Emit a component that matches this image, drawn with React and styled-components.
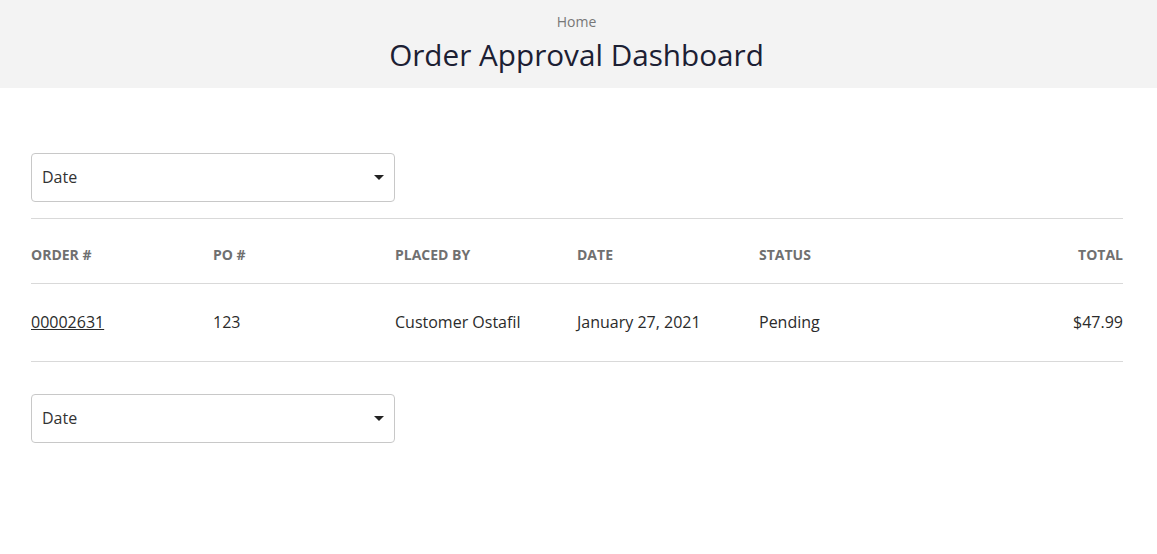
import React from 'react';
import styled, { createGlobalStyle } from 'styled-components';

const GlobalStyle = createGlobalStyle`
  body {
    margin: 0;
    background: #fff;
    font-family: "Open Sans", "Liberation Sans", sans-serif;
    color: #333;
  }
`;

const Header = styled.header`
  height: 88px;
  background: #f3f3f3;
  display: flex;
  flex-direction: column;
  align-items: center;
  box-sizing: border-box;
  padding: 12px 35px 0 31px;
`;

const Crumb = styled.a`
  font-size: 14px;
  line-height: 20px;
  color: #777;
  text-decoration: none;
`;

const Title = styled.h1`
  margin: 5px 0 0;
  font-size: 29.7px;
  font-weight: 400;
  line-height: 36px;
  color: #1c2033;
`;

const Main = styled.main`
  padding: 65px 34px 0 31px;
`;

const SelectBox = styled.div`
  width: 364px;
  height: 49px;
  box-sizing: border-box;
  border: 1px solid #c8c8c8;
  border-radius: 4px;
  display: flex;
  align-items: center;
  justify-content: space-between;
  padding: 0 10px 2px 10px;
  font-size: 16px;
  color: #333;
  margin-bottom: ${(p) => p.gap || 0}px;
`;

const Caret = styled.span`
  width: 0;
  height: 0;
  border-left: 5px solid transparent;
  border-right: 5px solid transparent;
  border-top: 5px solid #222;
  margin: 2px 0 0;
`;

const Table = styled.div`
  border-top: 1px solid #d9d9d9;
  margin-bottom: 32px;
`;

const Row = styled.div`
  display: grid;
  grid-template-columns: repeat(6, 1fr);
  align-items: center;
  height: ${(p) => p.h}px;
  padding-top: ${(p) => p.top || 0}px;
  padding-bottom: ${(p) => p.bottom || 0}px;
  border-bottom: 1px solid #d9d9d9;
  box-sizing: border-box;
`;

const HeadCell = styled.div`
  font-size: 14px;
  font-weight: 700;
  text-transform: uppercase;
  color: #707070;
  text-align: ${(p) => (p.right ? 'right' : 'left')};
`;

const Cell = styled.div`
  font-size: 16px;
  color: #2b2b2b;
  text-align: ${(p) => (p.right ? 'right' : 'left')};
`;

const OrderLink = styled.a`
  color: #2b2b2b;
  text-decoration: underline;
`;

const DateSelect = ({ gap }) => (
  <SelectBox gap={gap}>
    <span>Date</span>
    <Caret />
  </SelectBox>
);

const App = () => (
  <>
    <GlobalStyle />
    <Header>
      <Crumb href="#">Home</Crumb>
      <Title>Order Approval Dashboard</Title>
    </Header>
    <Main>
      <DateSelect gap={16} />
      <Table>
        <Row h={65} top={6}>
          <HeadCell>Order #</HeadCell>
          <HeadCell>PO #</HeadCell>
          <HeadCell>Placed By</HeadCell>
          <HeadCell>Date</HeadCell>
          <HeadCell>Status</HeadCell>
          <HeadCell right>Total</HeadCell>
        </Row>
        <Row h={78} bottom={2}>
          <Cell>
            <OrderLink href="#">00002631</OrderLink>
          </Cell>
          <Cell>123</Cell>
          <Cell>Customer Ostafil</Cell>
          <Cell>January 27, 2021</Cell>
          <Cell>Pending</Cell>
          <Cell right>$47.99</Cell>
        </Row>
      </Table>
      <DateSelect />
    </Main>
  </>
);

export default App;
